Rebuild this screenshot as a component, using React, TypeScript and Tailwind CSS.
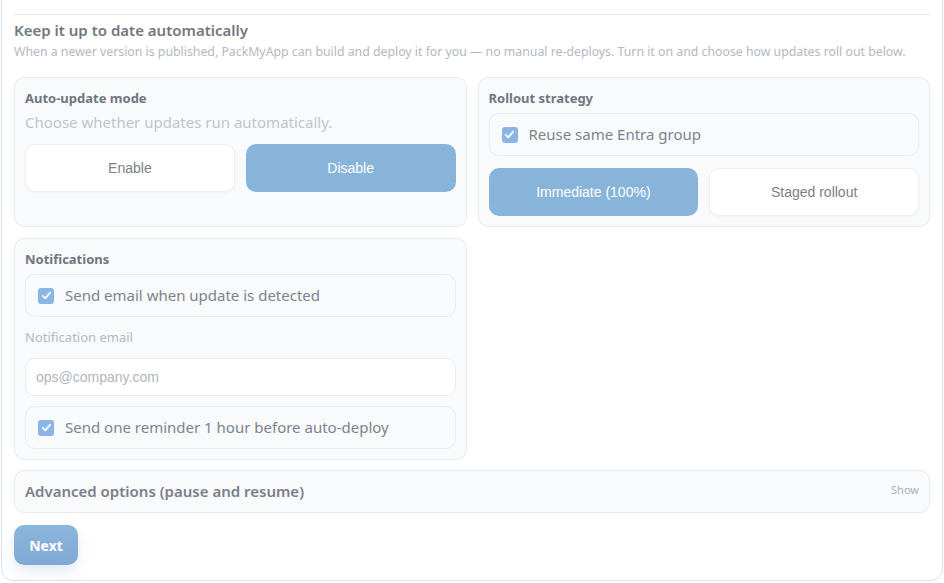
import React from "react";

const ui = { fontFamily: '"Noto Sans", "Open Sans", sans-serif' };
const arial = { fontFamily: '"Liberation Sans", Arial, sans-serif' };

function Check() {
  return (
    <span className="flex h-4 w-4 shrink-0 items-center justify-center rounded-[3px] bg-[#8ab6e6]">
      <svg viewBox="0 0 16 16" className="h-[13px] w-[13px]" fill="none">
        <path d="M3.5 8.5l3 3 6-7" stroke="white" strokeWidth="2.2" strokeLinecap="round" strokeLinejoin="round" />
      </svg>
    </span>
  );
}

function CheckRow({ label }: { label: string }) {
  return (
    <div className="flex h-[43px] items-center gap-[11px] rounded-[10px] border border-[#e8edf4] bg-[#f8fafc] px-[12px]">
      <Check />
      <span className="text-[15px] text-[#7d838c]">{label}</span>
    </div>
  );
}

function Card({ title, children }: { title: string; children: React.ReactNode }) {
  return (
    <div className="flex flex-col rounded-[10px] border border-[#e6ebf2] bg-[#f8fafc] px-[10px] pb-[10px] pt-[11px]">
      <div className="mb-[6px] text-[13px] font-bold leading-[18px] text-[#71767f]">{title}</div>
      {children}
    </div>
  );
}

export default function App() {
  return (
    <div className="h-[583px] w-[944px] overflow-hidden bg-white" style={ui}>
      <div className="-mt-[20px] ml-[1px] w-[942px] rounded-b-[12px] border border-[#dbe4ef] bg-white px-[12px] pb-[15px] pt-[33px]">
        <div className="border-t border-[#e5eaf1] pt-[4px]">
          <div className="text-[15px] font-semibold leading-[22px] text-[#73787f]">Keep it up to date automatically</div>
          <div className="mt-[3px] text-[12.3px] leading-[16px] text-[#b3b9c2]">
            When a newer version is published, PackMyApp can build and deploy it for you — no manual re-deploys. Turn it on and choose how updates roll out below.
          </div>
        </div>

        <div className="mt-[17px] grid grid-cols-2 gap-[11px]">
          <Card title="Auto-update mode">
            <div className="mb-[12px] mt-[-1px] text-[15px] leading-[20px] text-[#c0c5cc]">Choose whether updates run automatically.</div>
            <div className="grid grid-cols-2 gap-[11px]" style={arial}>
              <div className="flex h-[48px] items-center justify-center rounded-[10px] border border-[#edf1f6] bg-white text-[14px] text-[#7a8088] shadow-[0_1px_3px_rgba(15,23,42,0.04)]">Enable</div>
              <div className="flex h-[48px] items-center justify-center rounded-[10px] bg-[#88b4da] text-[14px] text-white">Disable</div>
            </div>
          </Card>

          <Card title="Rollout strategy">
            <CheckRow label="Reuse same Entra group" />
            <div className="mt-[12px] grid grid-cols-2 gap-[11px]" style={arial}>
              <div className="flex h-[48px] items-center justify-center rounded-[10px] bg-[#88b4da] text-[14px] text-white">Immediate (100%)</div>
              <div className="flex h-[48px] items-center justify-center rounded-[10px] border border-[#edf1f6] bg-white text-[14px] text-[#7a8088] shadow-[0_1px_3px_rgba(15,23,42,0.04)]">Staged rollout</div>
            </div>
          </Card>

          <Card title="Notifications">
            <CheckRow label="Send email when update is detected" />
            <div className="mt-[11px] text-[13px] leading-[18px] text-[#b3b9c2]">Notification email</div>
            <div className="mt-[12px] flex h-[38px] items-center rounded-[10px] border border-[#e8edf4] bg-white px-[10px] text-[14px] text-[#b0b6be]" style={arial}>
              ops@company.com
            </div>
            <div className="mt-[10px]">
              <CheckRow label="Send one reminder 1 hour before auto-deploy" />
            </div>
          </Card>
          <div />
        </div>

        <div className="mt-[10px] flex h-[43px] items-center justify-between rounded-[10px] border border-[#e6ebf2] bg-[#f8fafc] px-[10px]">
          <span className="text-[15px] font-semibold text-[#7b8088]">Advanced options (pause and resume)</span>
          <span className="-mt-[3px] text-[11px] text-[#aab0b8]">Show</span>
        </div>

        <div className="mt-[12px]">
          <button className="flex h-[40px] w-[64px] items-center justify-center rounded-[10px] bg-gradient-to-b from-[#8bb6dc] to-[#80a8d3] text-[14px] font-bold text-white shadow-[0_6px_14px_rgba(100,140,190,0.18)]">
            Next
          </button>
        </div>
      </div>
    </div>
  );
}
